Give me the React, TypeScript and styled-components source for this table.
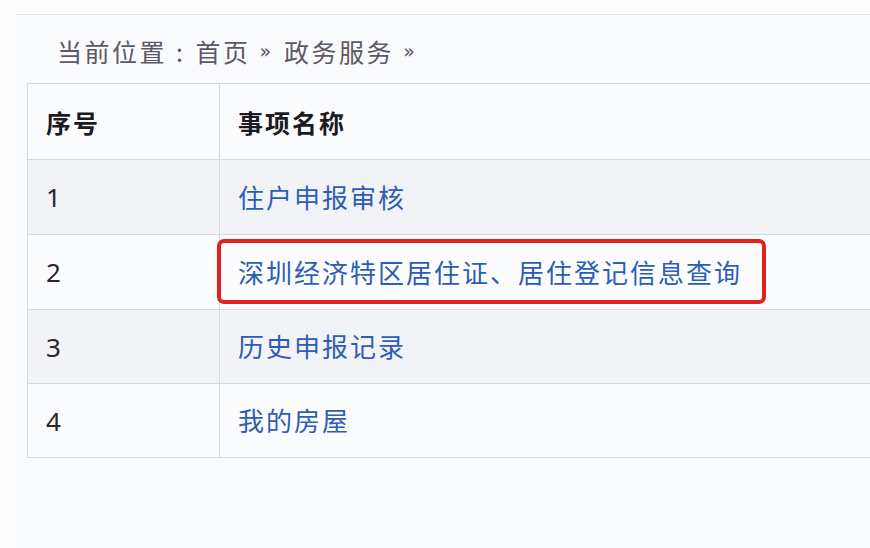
import React from "react";
import styled, { createGlobalStyle } from "styled-components";

const GlobalStyle = createGlobalStyle`
  html, body {
    margin: 0;
    padding: 0;
    background: #fdfdfe;
  }
  body {
    font-family: "Noto Sans CJK SC", "Noto Sans", sans-serif;
  }
`;

const Page = styled.div`
  width: 870px;
  height: 548px;
  box-sizing: border-box;
  padding: 14px 0 0 16px;
  overflow: hidden;
  background: #fdfdfe;
`;

const Panel = styled.section`
  border-top: 1px solid #dfe2e7;
  background: #fafbfd;
  height: 100%;
  box-sizing: border-box;
  padding-left: 11px;
`;

const Breadcrumb = styled.nav`
  height: 68px;
  display: flex;
  align-items: center;
  padding: 4px 0 0 30px;
  box-sizing: border-box;
  font-size: 25px;
  letter-spacing: 2.5px;
  color: #5d5866;
  font-weight: 400;
`;

const Colon = styled.span`
  margin: 0 10px 0 9px;
`;

const Sep = styled.span`
  margin: 0 13px 0 9px;
  font-family: "DejaVu Sans", sans-serif;
  font-size: 19px;
  letter-spacing: 0;
`;

const Table = styled.table`
  width: 860px;
  border-collapse: collapse;
  border: 1px solid #d6d8dc;
  table-layout: fixed;
`;

const Row = styled.tr<{ $striped?: boolean; $h: number }>`
  height: ${(p) => p.$h}px;
  background: ${(p) => (p.$striped ? "#f2f3f6" : "#fbfcfe")};
`;

const HeadCell = styled.th<{ $w?: number }>`
  ${(p) => (p.$w ? `width: ${p.$w}px;` : "")}
  border: 1px solid #d6d8dc;
  text-align: left;
  padding: 0 0 0 18px;
  font-size: 25px;
  font-weight: 700;
  letter-spacing: 2px;
  color: #1c1a22;
  vertical-align: middle;
`;

const Cell = styled.td`
  position: relative;
  border: 1px solid #d6d8dc;
  padding: 0 0 2px 18px;
  font-size: 26px;
  letter-spacing: 2px;
  color: #2a2530;
  vertical-align: middle;
`;

const Num = styled.span`
  font-family: "Noto Sans", "Liberation Sans", sans-serif;
  font-size: 26px;
  color: #2a2530;
`;

const Link = styled.a`
  color: #2e5db5;
  text-decoration: none;
  cursor: pointer;
`;

const Highlight = styled.span`
  position: absolute;
  left: -3px;
  top: 4px;
  width: 549px;
  height: 65px;
  box-sizing: border-box;
  border: 4px solid #e3211c;
  border-radius: 7px;
  pointer-events: none;
`;

const items = [
  { n: 1, name: "住户申报审核" },
  { n: 2, name: "深圳经济特区居住证、居住登记信息查询", marked: true },
  { n: 3, name: "历史申报记录" },
  { n: 4, name: "我的房屋" },
];

const heights = [75, 75, 74, 74];

export default function App() {
  return (
    <>
      <GlobalStyle />
      <Page>
        <Panel>
          <Breadcrumb>
            当前位置<Colon>:</Colon>首页<Sep>»</Sep>政务服务<Sep>»</Sep>
          </Breadcrumb>
          <Table>
            <thead>
              <Row $h={76}>
                <HeadCell $w={173}>序号</HeadCell>
                <HeadCell>事项名称</HeadCell>
              </Row>
            </thead>
            <tbody>
              {items.map((it, i) => (
                <Row key={it.n} $striped={i % 2 === 0} $h={heights[i]}>
                  <Cell>
                    <Num>{it.n}</Num>
                  </Cell>
                  <Cell>
                    <Link>{it.name}</Link>
                    {it.marked && <Highlight />}
                  </Cell>
                </Row>
              ))}
            </tbody>
          </Table>
        </Panel>
      </Page>
    </>
  );
}
